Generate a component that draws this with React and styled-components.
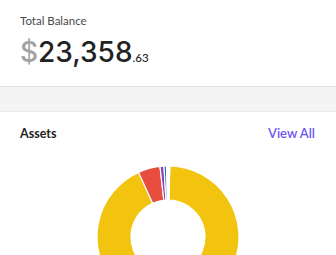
import React from 'react';
import styled, { createGlobalStyle } from 'styled-components';

const GlobalStyle = createGlobalStyle`
  body {
    margin: 0;
    background: #ffffff;
    font-family: 'Lato', 'Noto Sans', sans-serif;
    overflow: hidden;
  }
`;

const Page = styled.div`
  width: 336px;
  height: 255px;
  overflow: hidden;
  background: #ffffff;
`;

const BalanceCard = styled.section`
  height: 86px;
  padding: 13px 20px 0 20px;
  box-sizing: border-box;
`;

const Label = styled.div`
  font-size: 11.5px;
  color: #4a4a4a;
  line-height: 15px;
`;

const Amount = styled.div`
  margin-top: 7px;
  display: flex;
  align-items: baseline;
  line-height: 34px;
  color: #222222;
  font-family: 'Inter', 'Lato', sans-serif;
`;

const Currency = styled.span`
  font-size: 28px;
  font-weight: 500;
  color: #a3a3a3;
`;

const Whole = styled.span`
  font-size: 28px;
  font-weight: 500;
`;

const Cents = styled.span`
  font-size: 11.5px;
  font-weight: 500;
  font-family: 'Lato', sans-serif;
`;

const Divider = styled.div`
  height: 24px;
  background: #f4f4f4;
  border-top: 1px solid #e2e2e2;
  border-bottom: 1px solid #e9e9e9;
`;

const AssetsCard = styled.section`
  padding: 13px 20px 0 20px;
`;

const Header = styled.div`
  display: flex;
  justify-content: space-between;
  align-items: center;
  height: 16px;
`;

const Title = styled.h3`
  margin: 0;
  font-size: 12.5px;
  font-weight: 700;
  color: #222222;
`;

const ViewAll = styled.a`
  font-size: 13px;
  font-weight: 600;
  color: #6d55f0;
  text-decoration: none;
  margin-right: 1px;
`;

const ChartWrap = styled.div`
  display: flex;
  justify-content: center;
  margin-top: 23px;
`;

const segments = [
  { value: 92.8, color: '#f2c40f' },
  { value: 5.0, color: '#e74c3c' },
  { value: 0.9, color: '#8e44ad' },
  { value: 0.6, color: '#2b6fd6' },
  { value: 0.7, color: '#ffffff' },
];

const arc = (cx, cy, r, ir, a0, a1) => {
  const p = (rad, a) => [cx + rad * Math.sin(a), cy - rad * Math.cos(a)];
  const large = a1 - a0 > Math.PI ? 1 : 0;
  const [x0, y0] = p(r, a0);
  const [x1, y1] = p(r, a1);
  const [x2, y2] = p(ir, a1);
  const [x3, y3] = p(ir, a0);
  return `M${x0} ${y0} A${r} ${r} 0 ${large} 1 ${x1} ${y1} L${x2} ${y2} A${ir} ${ir} 0 ${large} 0 ${x3} ${y3} Z`;
};

const Donut = () => {
  const total = segments.reduce((s, x) => s + x.value, 0);
  let start = 0.004 * Math.PI * 2;
  return (
    <svg width="146" height="146" viewBox="0 0 146 146">
      {segments.map((s, i) => {
        const a0 = start;
        const a1 = start + (s.value / total) * Math.PI * 2;
        start = a1;
        return (
          <path
            key={i}
            d={arc(73, 73, 71, 37, a0, a1)}
            fill={s.color}
            stroke="#ffffff"
            strokeWidth="1.2"
          />
        );
      })}
    </svg>
  );
};

const App = () => (
  <Page>
    <GlobalStyle />
    <BalanceCard>
      <Label>Total Balance</Label>
      <Amount>
        <Currency>$</Currency>
        <Whole>23,358</Whole>
        <Cents>.63</Cents>
      </Amount>
    </BalanceCard>
    <Divider />
    <AssetsCard>
      <Header>
        <Title>Assets</Title>
        <ViewAll href="#">View All</ViewAll>
      </Header>
      <ChartWrap>
        <Donut />
      </ChartWrap>
    </AssetsCard>
  </Page>
);

export default App;
